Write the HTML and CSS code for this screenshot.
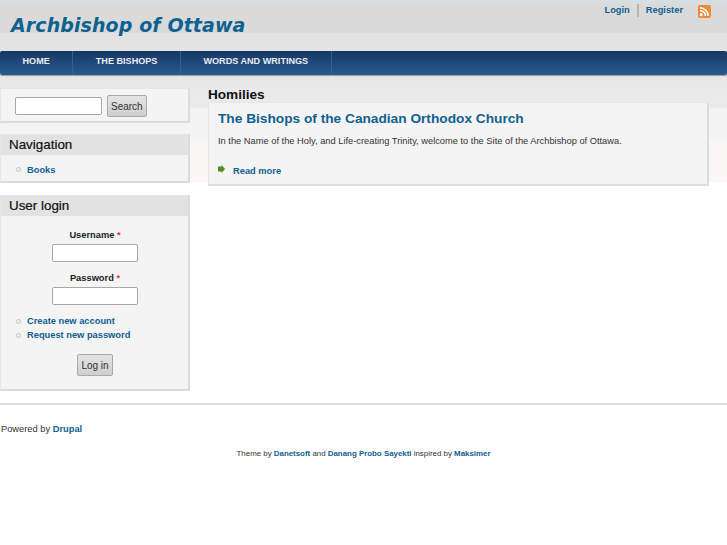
FILE: index.html
```html
<!DOCTYPE html>
<html lang="en">

<head>
    <meta charset="UTF-8">
    <title>Archbishop of Ottawa</title>
    <link rel="stylesheet" href="styles.css">
</head>

<body>
    <div class="header">
        <h1 class="site-name"><a href="#">Archbishop of Ottawa</a></h1>
        <div class="top-links">
            <a href="#" class="login">Login</a>
            <a href="#" class="register">Register</a>
            <a href="#" class="rss">
                <svg width="13" height="13" viewBox="0 0 13 13">
                    <rect width="13" height="13" rx="2" fill="#ee8a3a" />
                    <circle cx="3.2" cy="9.8" r="1.5" fill="#fff" />
                    <path d="M2 5.6a5.4 5.4 0 0 1 5.4 5.4M2 2.8a8.2 8.2 0 0 1 8.2 8.2" fill="none" stroke="#fff" stroke-width="1.6" />
                </svg>
            </a>
        </div>
    </div>

    <!-- Main menu -->
    <ul class="menu">
        <li><a href="#">HOME</a></li>
        <li><a href="#">THE BISHOPS</a></li>
        <li><a href="#">WORDS AND WRITINGS</a></li>
    </ul>

    <div class="page">
        <div class="sidebar">
            <div class="block search-block">
                <input type="text" class="search-input">
                <button class="btn">Search</button>
            </div>

            <div class="block">
                <h2>Navigation</h2>
                <ul class="links">
                    <li><a href="#">Books</a></li>
                </ul>
            </div>

            <div class="block">
                <h2>User login</h2>
                <div class="login-form">
                    <label>Username <span class="req">*</span></label>
                    <input type="text">
                    <label>Password <span class="req">*</span></label>
                    <input type="password">
                </div>
                <ul class="links account-links">
                    <li><a href="#">Create new account</a></li>
                    <li><a href="#">Request new password</a></li>
                </ul>
                <div class="login-action">
                    <button class="btn">Log in</button>
                </div>
            </div>
        </div>

        <div class="content">
            <h2 class="page-title">Homilies</h2>
            <div class="node">
                <h3><a href="#">The Bishops of the Canadian Orthodox Church</a></h3>
                <p>In the Name of the Holy, and Life-creating Trinity, welcome to the Site of the Archbishop of Ottawa.</p>
                <div class="read-more">
                    <span class="arrow"></span>
                    <a href="#">Read more</a>
                </div>
            </div>
        </div>
    </div>

    <div class="footer">
        <p class="powered">Powered by <a href="#">Drupal</a></p>
        <p class="credits">Theme by <a href="#">Danetsoft</a> and <a href="#">Danang Probo Sayekti</a> inspired by <a href="#">Maksimer</a></p>
    </div>
</body>

</html>
```

FILE: styles.css
```css
body {
    font-family: "Liberation Sans", Arial, sans-serif;
    font-size: 9.3px;
    margin: 0;
    padding: 0;
    color: #333;
    background: linear-gradient(to bottom,
            #d8dde0 0, #d8dde0 4px,
            #dadada 4px, #dadada 33px,
            #e2e2e2 33px, #ebebeb 108px,
            #f4f4f4 108px, #f4f4f4 140px,
            #f8f7f6 140px, #f8f7f6 182px,
            #fff 182px) no-repeat;
}

a {
    color: #0f6190;
    font-weight: bold;
    text-decoration: none;
}

/* HEADER */
.header {
    display: flex;
    justify-content: space-between;
    height: 51px;
}

.site-name {
    font-family: "DejaVu Sans", sans-serif;
    font-size: 19px;
    font-style: italic;
    font-weight: bold;
    letter-spacing: 0.1px;
    line-height: 23px;
    margin: 14px 0 0 11px;
}

.top-links {
    display: flex;
    align-items: flex-start;
    padding: 4px 16px 0 0;
    line-height: 12px;
}

.login {
    padding-right: 7px;
    border-right: 2px solid #b5b5b5;
    height: 13px;
}

.register {
    margin: 0 15px 0 7px;
}

.rss {
    margin-top: 1px;
}

/* MENU */
.menu {
    display: flex;
    list-style: none;
    height: 24px;
    margin: 0;
    padding: 0;
    border-radius: 2px;
    background: linear-gradient(to bottom, #183763, #265b92);
    box-shadow: 0 1px 1px #999;
}

.menu li {
    border-right: 1px solid #2f6294;
}

.menu a {
    display: block;
    padding: 0 22.5px;
    color: #e8eef4;
    font-size: 9.1px;
    line-height: 21px;
}

/* LAYOUT */
.page {
    display: flex;
    margin-top: 13px;
}

.sidebar {
    width: 190px;
    margin-right: 18px;
}

.content {
    width: 501px;
}

.block {
    background: #f4f4f4;
    border: 1px solid #e6e6e6;
    border-right: 2px solid #dcdcdc;
    border-bottom: 2px solid #dcdcdc;
    box-sizing: border-box;
    margin-bottom: 12px;
}

.block h2 {
    background: #e2e2e2;
    color: #111;
    font-size: 13.4px;
    font-weight: normal;
    -webkit-text-stroke: 0.2px #111;
    line-height: 20px;
    margin: 0;
    padding: 0 8px;
}

input {
    display: block;
    box-sizing: border-box;
    height: 18px;
    padding: 0;
    background: #fff;
    border: 1px solid #a8a8a8;
    border-radius: 2px;
}

.btn {
    font-family: "Liberation Sans", Arial, sans-serif;
    font-size: 10px;
    color: #333;
    height: 22px;
    padding: 0 3px;
    background: linear-gradient(to bottom, #e4e4e4, #cfcfcf);
    border: 1px solid #aaa;
    border-radius: 2px;
}

.search-block {
    display: flex;
    align-items: center;
    gap: 5px;
    height: 35px;
    margin-bottom: 11px;
    padding: 2px 0 0 14px;
}

.search-input {
    width: 87px;
}

.links {
    list-style: none;
    margin: 0;
    padding: 8px 0 4px 26px;
}

.links li {
    position: relative;
    line-height: 14px;
}

.links li::before {
    content: "";
    position: absolute;
    left: -11px;
    top: 4px;
    width: 3px;
    height: 3px;
    border: 1px solid #c4c4c4;
    border-radius: 50%;
}

.login-form {
    display: flex;
    flex-direction: column;
    align-items: center;
    padding: 13px 0 0 1px;
}

.login-form label {
    font-weight: bold;
    font-size: 9.3px;
    line-height: 12px;
    margin-bottom: 3px;
    color: #222;
}

.login-form input {
    width: 86px;
    margin-bottom: 10px;
}

.req {
    color: #e33;
}

.account-links {
    padding: 0 0 0 26px;
}

.account-links li {
    line-height: 13px;
    margin-bottom: 1px;
}

.login-action {
    display: flex;
    justify-content: center;
    padding: 11px 0 13px 1px;
}

/* CONTENT */
.page-title {
    color: #111;
    font-size: 13.6px;
    line-height: 14px;
    margin: 0;
}

.node {
    background: #f4f4f4;
    border: 1px solid #e6e6e6;
    border-right: 2px solid #dcdcdc;
    border-bottom: 2px solid #dcdcdc;
    box-sizing: border-box;
    height: 84px;
    padding: 7px 9px;
}

.node h3 {
    font-size: 13.7px;
    line-height: 17px;
    margin: 0;
}

.node p {
    font-size: 9.3px;
    line-height: 13px;
    margin: 8px 0 0;
}

.read-more {
    display: flex;
    align-items: center;
    gap: 8px;
    margin-top: 17px;
}

.arrow {
    width: 7px;
    height: 8px;
    margin-bottom: 3px;
    background: #4c8f1c;
    clip-path: polygon(0 20%, 50% 20%, 50% 0, 100% 50%, 50% 100%, 50% 80%, 0 80%);
}

/* FOOTER */
.footer {
    border-top: 2px solid #dedede;
}

.powered {
    margin: 17px 0 0 1px;
    line-height: 14px;
}

.credits {
    font-size: 7.9px;
    text-align: center;
    margin: 12px 0 0;
    line-height: 11px;
}
```
